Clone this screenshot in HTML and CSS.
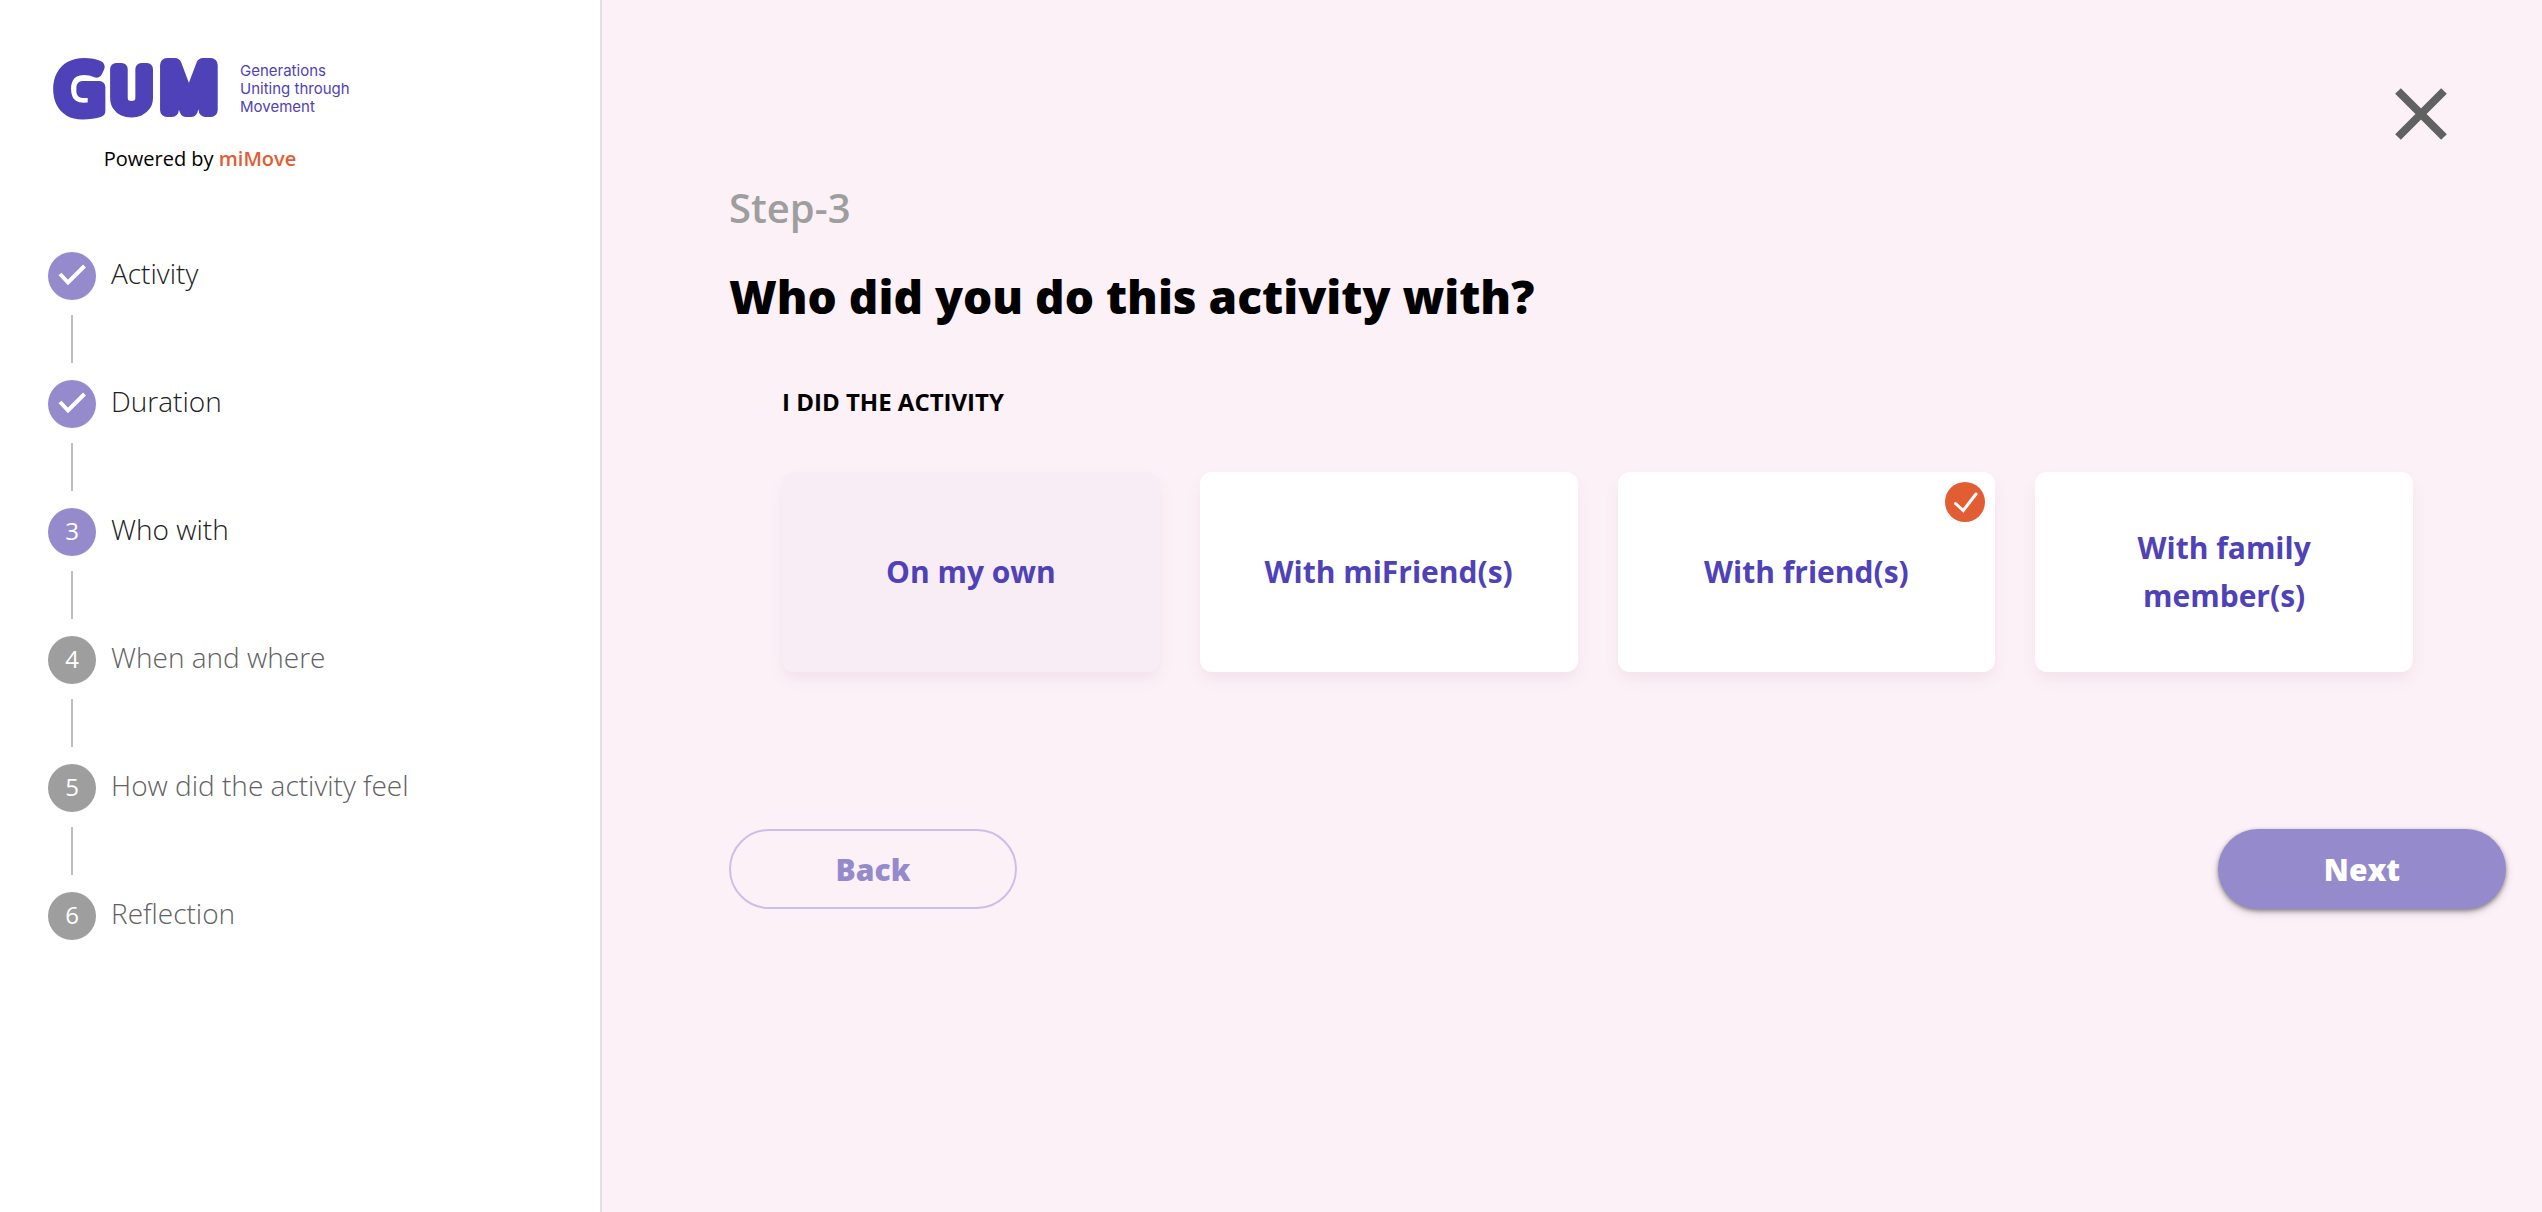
FILE: index.html
```
<!DOCTYPE html>
<html lang="en">
<head>
    <meta charset="UTF-8">
    <meta name="viewport" content="width=device-width, initial-scale=1.0">
    <title>GUM - Add activity</title>
    <link rel="stylesheet" href="styles.css">
</head>
<body>
    <aside class="sidebar">
        <div class="brand">
            <div class="logo">
                <svg class="logo-mark" width="176" height="104" viewBox="0 0 176 104" role="img" aria-label="GUM">
                    <text class="letter-g" x="3" y="77">G</text>
                    <text class="letter-u" x="60" y="75">U</text>
                    <text class="letter-m" x="109" y="74">M</text>
                </svg>
                <p class="tagline">Generations<br>Uniting through<br>Movement</p>
            </div>
            <p class="powered">Powered by <b>miMove</b></p>
        </div>

        <ol class="steps">
            <li class="step done">
                <span class="step-dot">
                    <svg width="28" height="22" viewBox="0 0 28 22"><path d="M2 10l8 8.500L26.500 2"/></svg>
                </span>
                <span class="step-label">Activity</span>
            </li>
            <li class="step done">
                <span class="step-dot">
                    <svg width="28" height="22" viewBox="0 0 28 22"><path d="M2 10l8 8.500L26.500 2"/></svg>
                </span>
                <span class="step-label">Duration</span>
            </li>
            <li class="step current">
                <span class="step-dot">3</span>
                <span class="step-label">Who with</span>
            </li>
            <li class="step">
                <span class="step-dot">4</span>
                <span class="step-label">When and where</span>
            </li>
            <li class="step">
                <span class="step-dot">5</span>
                <span class="step-label">How did the activity feel</span>
            </li>
            <li class="step">
                <span class="step-dot">6</span>
                <span class="step-label">Reflection</span>
            </li>
        </ol>
    </aside>

    <main class="content">
        <div class="top-bar">
            <button type="button" class="close-btn" aria-label="Close">
                <svg width="52" height="52" viewBox="0 0 52 52"><path d="M3 3l46 46M49 3L3 49"/></svg>
            </button>
        </div>

        <p class="step-count">Step-3</p>
        <h1 class="question">Who did you do this activity with?</h1>

        <section class="options">
            <h2 class="options-title">I DID THE ACTIVITY</h2>
            <div class="cards">
                <button type="button" class="card muted">On my own</button>
                <button type="button" class="card">With miFriend(s)</button>
                <button type="button" class="card" aria-pressed="true">
                    With friend(s)
                    <svg class="card-check" width="40" height="40" viewBox="0 0 40 40">
                        <circle cx="20" cy="20" r="20"/>
                        <path d="M10.500 21.500l7.800 7L31 12"/>
                    </svg>
                </button>
                <button type="button" class="card">With family member(s)</button>
            </div>
        </section>

        <div class="actions">
            <button type="button" class="btn back-btn">Back</button>
            <button type="button" class="btn next-btn">Next</button>
        </div>
    </main>
</body>
</html>
```
FILE: styles.css
```
* {
    margin: 0;
    padding: 0;
    box-sizing: border-box;
}

body {
    font-family: 'Open Sans', 'Noto Sans', sans-serif;
    background: #fdf1f8;
    color: #000;
    min-height: 100vh;
    display: flex;
}

button {
    font-family: inherit;
    cursor: pointer;
}

/* Sidebar */
.sidebar {
    width: 602px;
    flex-shrink: 0;
    padding: 36px 48px;
    background: #fff;
    border-right: 2px solid #e0e0e0;
}

.brand {
    width: 304px;
}

.logo {
    display: flex;
    align-items: center;
    gap: 12px;
}

.logo-mark {
    margin-left: 4px;
    flex-shrink: 0;
    overflow: visible;
}

.logo-mark text {
    font-weight: 400;
    fill: #4f42b8;
    stroke: #4f42b8;
    stroke-width: 12px;
    stroke-linejoin: round;
}

.letter-g {
    font-family: 'Open Sans', sans-serif;
    font-size: 68px;
}

.letter-u {
    font-family: 'Roboto', sans-serif;
    font-size: 60px;
}

.logo-mark .letter-m {
    font-family: 'Open Sans', sans-serif;
    font-size: 62px;
    stroke-width: 14px;
}

.tagline {
    padding-top: 2px;
    font-family: 'Inter', sans-serif;
    font-size: 15px;
    line-height: 18px;
    color: #4f42b8;
    white-space: nowrap;
}

.powered {
    margin-top: 4px;
    font-size: 20px;
    line-height: 30px;
    text-align: center;
}

.powered b {
    font-weight: 600;
    color: #e35d34;
}

.steps {
    margin-top: 78px;
    list-style: none;
}

.step {
    display: grid;
    grid-template-columns: 48px 1fr;
    column-gap: 15px;
    color: #616161;
}

/* connector between two steps */
.step:not(:last-child)::after {
    content: '';
    width: 2px;
    height: 48px;
    margin: 15px auto 17px;
    background: #bdbdbd;
}

.step-dot {
    width: 48px;
    height: 48px;
    border-radius: 50%;
    background: #9e9e9e;
    color: #fff;
    font-size: 24px;
    line-height: 46px;
    text-align: center;
}

.step-dot svg {
    display: block;
    margin: 12px auto;
}

.step-dot path {
    fill: none;
    stroke: #fff;
    stroke-width: 4;
}

.step-label {
    font-size: 28px;
    font-weight: 300;
    line-height: 42px;
}

.done,
.current {
    color: #212121;
}

.done .step-dot,
.current .step-dot {
    background: #958bcc;
}

/* Main panel */
.content {
    flex: 1;
    padding: 88px 36px 88px 127px;
}

.top-bar {
    display: flex;
    justify-content: flex-end;
    padding-right: 59px;
}

.close-btn {
    height: 52px;
    border: none;
    background: none;
}

.close-btn path {
    stroke: #616161;
    stroke-width: 8;
}

.step-count {
    margin-top: 38px;
    font-size: 40px;
    font-weight: 600;
    line-height: 60px;
    color: #9e9e9e;
}

.question {
    margin-top: 22px;
    font-size: 46px;
    font-weight: 800;
    line-height: 72px;
}

.options {
    padding: 52px 93px 0 53px;
}

.options-title {
    font-size: 24px;
    font-weight: 700;
    line-height: 36px;
}

.cards {
    margin-top: 52px;
    display: grid;
    grid-template-columns: repeat(4, 1fr);
    gap: 40px;
}

.card {
    position: relative;
    min-height: 200px;
    padding: 0 48px;
    border: none;
    border-radius: 12px;
    background: #fff;
    box-shadow: 0 8px 16px rgba(80, 0, 40, 0.06);
    color: #4f42b8;
    font-size: 30px;
    font-weight: 700;
    line-height: 48px;
}

.card.muted {
    background: #f8edf5;
}

.card-check {
    position: absolute;
    top: 10px;
    right: 10px;
}

.card-check circle {
    fill: #e35d34;
}

.card-check path {
    fill: none;
    stroke: #fff;
    stroke-width: 3;
    stroke-linecap: round;
}

.actions {
    margin-top: 157px;
    display: flex;
    justify-content: space-between;
}

.btn {
    width: 288px;
    height: 80px;
    border: none;
    border-radius: 40px;
    font-size: 30px;
    font-weight: 800;
}

.back-btn {
    border: 2px solid #cabfe5;
    background: transparent;
    color: #958bcc;
}

.next-btn {
    background: #958bcc;
    color: #fff;
    box-shadow: 0 2px 4px rgba(0, 0, 0, 0.4), 0 4px 10px rgba(0, 0, 0, 0.14);
}
```
